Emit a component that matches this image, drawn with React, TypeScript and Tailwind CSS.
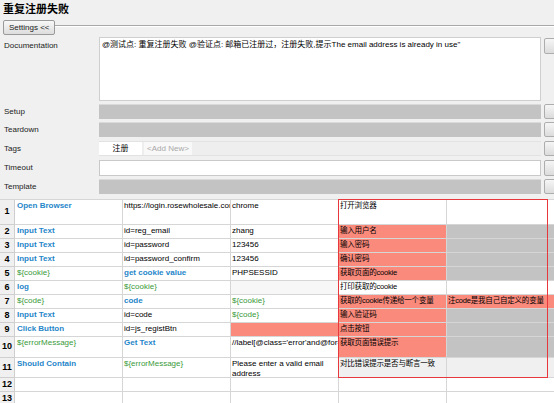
import React from "react";

type Cell = { t?: string; k?: "kw" | "var" | "txt" | "cn"; bg?: string; wrap?: boolean };

const KW = "text-[#1f86c9] font-bold";
const VAR = "text-[#3a9a3a]";

const rows: { h: string; cells: Cell[] }[] = [
  {
    h: "h-[25px]",
    cells: [
      { t: "Open Browser", k: "kw" },
      { t: "https://login.rosewholesale.com/m" },
      { t: "chrome" },
      { t: "打开浏览器", k: "cn" },
      {},
    ],
  },
  {
    h: "h-[14px]",
    cells: [
      { t: "Input Text", k: "kw" },
      { t: "id=reg_email" },
      { t: "zhang" },
      { t: "输入用户名", k: "cn", bg: "bg-[#fa8a7c]" },
      { bg: "bg-[#c3c3c3]" },
    ],
  },
  {
    h: "h-[14px]",
    cells: [
      { t: "Input Text", k: "kw" },
      { t: "id=password" },
      { t: "123456" },
      { t: "输入密码", k: "cn", bg: "bg-[#fa8a7c]" },
      { bg: "bg-[#c3c3c3]" },
    ],
  },
  {
    h: "h-[14px]",
    cells: [
      { t: "Input Text", k: "kw" },
      { t: "id=password_confirm" },
      { t: "123456" },
      { t: "确认密码", k: "cn", bg: "bg-[#fa8a7c]" },
      { bg: "bg-[#c3c3c3]" },
    ],
  },
  {
    h: "h-[14px]",
    cells: [
      { t: "${cookie}", k: "var" },
      { t: "get cookie value", k: "kw" },
      { t: "PHPSESSID" },
      { t: "获取页面的cookie", k: "cn", bg: "bg-[#fa8a7c]" },
      { bg: "bg-[#c3c3c3]" },
    ],
  },
  {
    h: "h-[14px]",
    cells: [
      { t: "log", k: "kw" },
      { t: "${cookie}", k: "var" },
      { bg: "bg-[#f7f7f7]" },
      { t: "打印获取的cookie", k: "cn" },
      {},
    ],
  },
  {
    h: "h-[14px]",
    cells: [
      { t: "${code}", k: "var" },
      { t: "code", k: "kw" },
      { t: "${cookie}", k: "var" },
      { t: "获取的cookie传递给一个变量", k: "cn", bg: "bg-[#fa8a7c]" },
      { t: "注code是我自己自定义的变量", k: "cn", bg: "bg-[#fa8a7c]" },
    ],
  },
  {
    h: "h-[14px]",
    cells: [
      { t: "Input Text", k: "kw" },
      { t: "id=code" },
      { t: "${code}", k: "var" },
      { t: "输入验证码", k: "cn", bg: "bg-[#fa8a7c]" },
      { bg: "bg-[#c3c3c3]" },
    ],
  },
  {
    h: "h-[14px]",
    cells: [
      { t: "Click Button", k: "kw" },
      { t: "id=js_registBtn" },
      { bg: "bg-[#fa8a7c]" },
      { t: "点击按钮", k: "cn", bg: "bg-[#fa8a7c]" },
      { bg: "bg-[#c3c3c3]" },
    ],
  },
  {
    h: "h-[21px]",
    cells: [
      { t: "${errorMessage}", k: "var" },
      { t: "Get Text", k: "kw" },
      { t: "//label[@class='error'and@for='reg_email']" },
      { t: "获取页面错误提示", k: "cn", bg: "bg-[#fa8a7c]" },
      { bg: "bg-[#c3c3c3]" },
    ],
  },
  {
    h: "h-[20px]",
    cells: [
      { t: "Should Contain", k: "kw" },
      { t: "${errorMessage}", k: "var" },
      { t: "Please enter a valid email address", wrap: true },
      { t: "对比错误提示是否与断言一致", k: "cn", bg: "bg-[#f0f0f0]" },
      { bg: "bg-[#f0f0f0]" },
    ],
  },
  { h: "h-[14px]", cells: [{}, {}, {}, {}, {}] },
  { h: "h-[14px]", cells: [{}, {}, {}, {}, {}] },
];

function SideButton({ h = "h-[15px]" }: { h?: string }) {
  return (
    <div
      className={`${h} w-[16px] shrink-0 rounded-[2px] border border-[#adadad] bg-gradient-to-b from-[#f6f6f6] to-[#dcdcdc]`}
    />
  );
}

function Label({ children }: { children: React.ReactNode }) {
  return <div className="w-[99px] shrink-0 pl-[4px] text-[8px] leading-[15px] text-[#222]">{children}</div>;
}

export default function App() {
  return (
    <div
      className="relative w-[554px] h-[403px] overflow-hidden bg-[#f0f0f0] text-black"
      style={{ fontFamily: '"Liberation Sans", "Noto Sans CJK SC", sans-serif' }}
    >
      <div
        className="h-[18px] pl-[3px] pt-[1px] text-[11px] font-bold leading-[15px]"
        style={{ fontFamily: '"Noto Sans CJK SC", serif' }}
      >
        重复注册失败
      </div>

      <div className="mt-[2px] flex h-[15px] items-start">
        <button className="ml-[3px] h-[15px] rounded-[2px] border border-[#9a9a9a] bg-gradient-to-b from-[#f8f8f8] to-[#dddddd] px-[5px] text-[8px] leading-[12px] text-[#222]">
          Settings &lt;&lt;
        </button>
        <div className="mt-[5px] flex-1 border-t border-[#a8a8a8] border-b-white border-b" />
      </div>

      <div className="mt-[2px] flex">
        <Label>
          <div className="pt-[1px]">Documentation</div>
        </Label>
        <div className="h-[64px] w-[442px] shrink-0 border border-[#cfcfcf] bg-white px-[2px] pt-[1px] text-[8px] leading-[12px]">
          @测试点: 重复注册失败 @验证点: 邮箱已注册过，注册失败,提示The email address is already in use"
        </div>
        <div className="ml-[3px] mt-[1px]">
          <SideButton h="h-[16px]" />
        </div>
      </div>

      <div className="mt-[3px] flex h-[15px]">
        <Label>Setup</Label>
        <div className="w-[442px] shrink-0 border-t border-[#dadada] bg-[#c3c3c3]" />
        <div className="ml-[3px]">
          <SideButton />
        </div>
      </div>

      <div className="mt-[3px] flex h-[15px]">
        <Label>Teardown</Label>
        <div className="w-[442px] shrink-0 border-t border-[#dadada] bg-[#c3c3c3]" />
        <div className="ml-[3px]">
          <SideButton />
        </div>
      </div>

      <div className="mt-[4px] flex h-[15px]">
        <Label>Tags</Label>
        <div className="flex w-[442px] shrink-0 gap-[2px] border-y border-[#e2e2e2] bg-[#eeeeee]">
          <div className="w-[43px] bg-white text-center text-[8px] leading-[13px]">注册</div>
          <div className="w-[48px] bg-[#f8f8f8] text-center text-[8px] leading-[13px] text-[#a8a8a8]">
            &lt;Add New&gt;
          </div>
        </div>
        <div className="ml-[3px]">
          <SideButton />
        </div>
      </div>

      <div className="mt-[4px] flex h-[16px]">
        <Label>Timeout</Label>
        <div className="w-[442px] shrink-0 border border-[#c9c9c9] bg-white" />
        <div className="ml-[3px]">
          <SideButton h="h-[16px]" />
        </div>
      </div>

      <div className="mt-[3px] flex h-[15px]">
        <Label>Template</Label>
        <div className="w-[442px] shrink-0 border-t border-[#dadada] bg-[#c3c3c3]" />
        <div className="ml-[3px]">
          <SideButton />
        </div>
      </div>

      <div className="relative mt-[5px] border-t border-[#d6d6d6]">
        {rows.map((r, i) => (
          <div key={i} className={`flex ${r.h}`}>
            <div className="flex w-[15px] shrink-0 items-center justify-center border-b border-r border-[#cfcfcf] bg-[#f0f0f0] text-[9px] font-bold">
              {i + 1}
            </div>
            {r.cells.map((c, j) => {
              const color = c.k === "kw" ? KW : c.k === "var" ? VAR : "text-black";
              const size = c.k === "cn" ? "text-[7.5px] tracking-[-0.2px]" : "text-[8px]";
              return (
                <div
                  key={j}
                  className={`w-[108px] shrink-0 overflow-hidden border-b border-r border-[#d6d6d6] ${
                    c.bg ?? "bg-white"
                  } ${j === 0 ? "pl-[2px]" : "pl-[1px]"} pt-[1px] ${size} leading-[10px] ${color} ${
                    c.wrap ? "whitespace-normal" : "whitespace-nowrap"
                  }`}
                >
                  {c.t}
                </div>
              );
            })}
          </div>
        ))}
        <div className="pointer-events-none absolute left-[338px] top-[-1px] h-[179px] w-[210px] ring-1 ring-inset ring-[#e8383d]" />
      </div>
    </div>
  );
}
